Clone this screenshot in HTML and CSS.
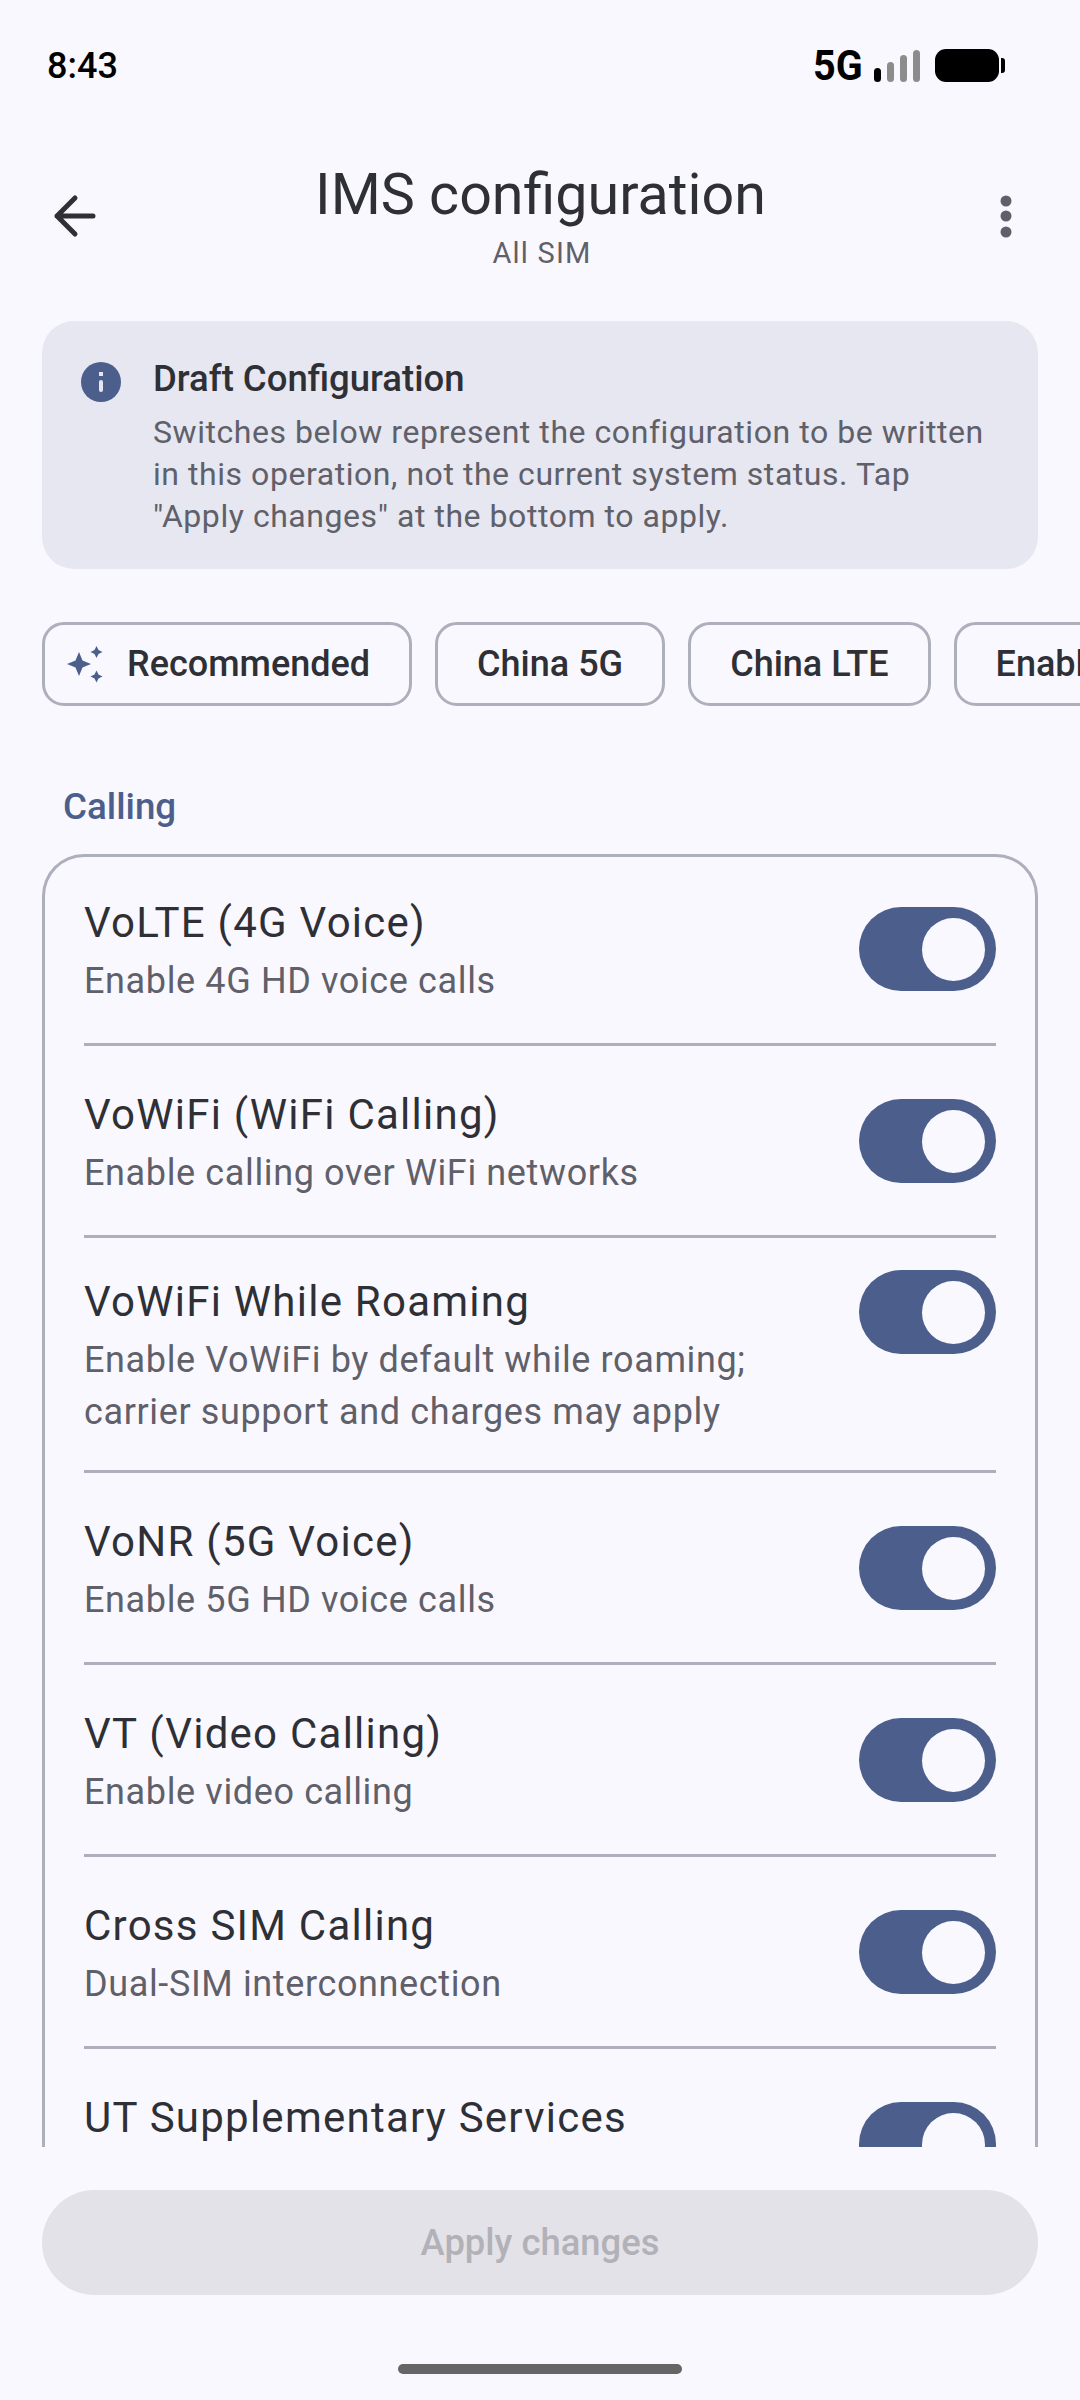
FILE: index.html
```html
<!DOCTYPE html>
<html lang="en">
<head>
  <meta charset="UTF-8">
  <title>IMS configuration</title>
  <link rel="stylesheet" href="styles.css">
</head>
<body>
  <div class="pantalla">
    <div class="estado">
      <span class="hora">8:43</span>
      <div class="estado-der">
        <span class="red">5G</span>
        <div class="senal">
          <i class="barra b1 activa"></i>
          <i class="barra b2"></i>
          <i class="barra b3"></i>
          <i class="barra b4"></i>
        </div>
        <div class="bateria"></div>
        <div class="bateria-tapa"></div>
      </div>
    </div>

    <header class="cabecera">
      <div class="icono-btn">
        <svg width="72" height="72" viewBox="0 0 72 72" fill="none" stroke="#2f3036" stroke-width="5" stroke-linecap="round" stroke-linejoin="round">
          <path d="M18 36H54M36 18L18 36L36 54"/>
        </svg>
      </div>
      <div class="titulos">
        <h1>IMS configuration</h1>
        <p>All SIM</p>
      </div>
      <div class="icono-btn">
        <svg width="72" height="72" viewBox="0 0 72 72" fill="#5f6069">
          <circle cx="36" cy="21" r="5.5"/>
          <circle cx="36" cy="36" r="5.5"/>
          <circle cx="36" cy="52" r="5.5"/>
        </svg>
      </div>
    </header>

    <main class="contenido">
      <section class="aviso">
        <svg class="aviso-icono" width="40" height="40" viewBox="0 0 40 40">
          <circle cx="20" cy="20" r="20" fill="#4c5f8c"/>
          <rect x="18" y="10" width="4" height="4" fill="#e6e7f0"/>
          <rect x="18" y="18" width="4" height="12" rx="2" fill="#e6e7f0"/>
        </svg>
        <div>
          <h2>Draft Configuration</h2>
          <p>Switches below represent the configuration to be written in this operation, not the current system status. Tap "Apply changes" at the bottom to apply.</p>
        </div>
      </section>

      <div class="chips">
        <div class="chip chip-icono">
          <svg width="40" height="40" viewBox="0 0 40 40" fill="#4c5f8c">
            <path d="M15 8L18.500 16.500L27 20L18.500 23.500L15 32L11.500 23.500L3 20L11.500 16.500Z"/>
            <path d="M32.500 2L34.500 6L38.500 8L34.500 10L32.500 14L30.500 10L26.500 8L30.500 6Z"/>
            <path d="M32.500 26.500L34.500 30.500L38.500 32.500L34.500 34.500L32.500 38.500L30.500 34.500L26.500 32.500L30.500 30.500Z"/>
          </svg>
          Recommended
        </div>
        <div class="chip">China 5G</div>
        <div class="chip">China LTE</div>
        <div class="chip">Enable all</div>
      </div>

      <h3 class="seccion">Calling</h3>

      <div class="lista">
        <div class="fila">
          <div class="fila-texto">
            <div class="fila-titulo">VoLTE (4G Voice)</div>
            <div class="fila-sub">Enable 4G HD voice calls</div>
          </div>
          <div class="switch"></div>
        </div>
        <div class="fila">
          <div class="fila-texto">
            <div class="fila-titulo">VoWiFi (WiFi Calling)</div>
            <div class="fila-sub">Enable calling over WiFi networks</div>
          </div>
          <div class="switch"></div>
        </div>
        <div class="fila">
          <div class="fila-texto">
            <div class="fila-titulo">VoWiFi While Roaming</div>
            <div class="fila-sub">Enable VoWiFi by default while roaming;<br>carrier support and charges may apply</div>
          </div>
          <div class="switch switch-arriba"></div>
        </div>
        <div class="fila">
          <div class="fila-texto">
            <div class="fila-titulo">VoNR (5G Voice)</div>
            <div class="fila-sub">Enable 5G HD voice calls</div>
          </div>
          <div class="switch"></div>
        </div>
        <div class="fila">
          <div class="fila-texto">
            <div class="fila-titulo">VT (Video Calling)</div>
            <div class="fila-sub">Enable video calling</div>
          </div>
          <div class="switch"></div>
        </div>
        <div class="fila">
          <div class="fila-texto">
            <div class="fila-titulo">Cross SIM Calling</div>
            <div class="fila-sub">Dual-SIM interconnection</div>
          </div>
          <div class="switch"></div>
        </div>
        <div class="fila">
          <div class="fila-texto fila-texto-cortada">
            <div class="fila-titulo">UT Supplementary Services</div>
          </div>
          <div class="switch"></div>
        </div>
      </div>
    </main>

    <footer class="pie">
      <button class="btn-aplicar">Apply changes</button>
      <div class="barra-inicio"></div>
    </footer>
  </div>
</body>
</html>
```

FILE: styles.css
```css
html, body {
  margin: 0;
  padding: 0;
  background: #faf8ff;
  font-family: Roboto, "Liberation Sans", sans-serif;
  color: #2f3036;
}

.pantalla {
  width: 1080px;
  height: 2400px;
  display: flex;
  flex-direction: column;
  overflow: hidden;
}

/* barra de estado */
.estado {
  height: 88px;
  flex: none;
  display: flex;
  justify-content: space-between;
  align-items: flex-start;
  padding: 0 75px 0 47px;
  box-sizing: border-box;
  color: #000;
}

.hora {
  font-size: 36px;
  font-weight: 500;
  line-height: 36px;
  margin-top: 48px;
}

.estado-der {
  display: flex;
  align-items: flex-end;
  height: 33px;
  margin-top: 49px;
}

.red {
  font-size: 43px;
  font-weight: 700;
  line-height: 33px;
  width: 61px;
  transform: scaleX(0.92);
  transform-origin: left;
}

.senal {
  display: flex;
  align-items: flex-end;
  gap: 6px;
  width: 61px;
}

.barra {
  display: block;
  width: 7px;
  border-radius: 4px;
  background: #8c8c8c;
}

.barra.activa { background: #000; }
.b1 { height: 14px; }
.b2 { height: 20px; }
.b3 { height: 27px; }
.b4 { height: 32px; }

.bateria {
  width: 64px;
  height: 33px;
  border-radius: 11px;
  background: #000;
}

.bateria-tapa {
  width: 4px;
  height: 15px;
  margin: 0 0 9px 2px;
  border-radius: 0 3px 3px 0;
  background: #000;
}

/* cabecera */
.cabecera {
  height: 233px;
  flex: none;
  display: flex;
  align-items: flex-start;
  padding: 0 38px 0 39px;
  box-sizing: border-box;
}

.icono-btn {
  width: 72px;
  height: 72px;
  flex: none;
  margin-top: 92px;
}

.icono-btn svg { display: block; }

.titulos {
  flex: 1;
  text-align: center;
  padding-top: 72px;
}

.titulos h1 {
  margin: 0;
  font-size: 57.400px;
  font-weight: 400;
  line-height: 70px;
}

.titulos p {
  margin: 4px 0 0;
  padding-left: 3px;
  font-size: 29px;
  line-height: 38px;
  letter-spacing: 1.200px;
  color: #5f6069;
}

/* contenido */
.contenido {
  flex: 1;
  min-height: 0;
  overflow: hidden;
  padding: 0 42px;
}

.aviso {
  height: 248px;
  display: flex;
  gap: 32px;
  padding: 41px 39px 0;
  box-sizing: border-box;
  border-radius: 32px;
  background: #e6e7f0;
}

.aviso-icono { flex: none; }

.aviso h2 {
  margin: -4px 0 0;
  font-size: 36.500px;
  font-weight: 500;
  line-height: 42px;
}

.aviso p {
  margin: 11px 0 0;
  font-size: 32px;
  line-height: 42px;
  letter-spacing: 0.550px;
  color: #5f6069;
}

.chips {
  display: flex;
  gap: 23px;
  margin: 53px -42px 0 0;
  overflow: hidden;
}

.chip {
  height: 84px;
  flex: none;
  display: flex;
  align-items: center;
  gap: 23px;
  padding: 0 39px;
  box-sizing: border-box;
  border: 3px solid #aeafbc;
  border-radius: 22px;
  font-size: 36px;
  font-weight: 500;
}

.chip-icono { padding-left: 19px; }
.chip-icono svg { flex: none; }

.seccion {
  margin: 76px 0 22px 21px;
  font-size: 36.750px;
  font-weight: 500;
  line-height: 50px;
  color: #4c5f8c;
}

.lista {
  padding: 0 42px;
  border-radius: 42px;
  box-shadow: inset 0 0 0 3px #aeafbc;
}

.fila {
  min-height: 125px;
  display: flex;
  justify-content: space-between;
  align-items: center;
  padding: 32px 0;
  border-bottom: 3px solid #aeafbc;
}

.fila-texto-cortada { height: 116px; }

.fila-titulo {
  font-size: 42px;
  line-height: 64px;
  letter-spacing: 1.250px;
}

.fila-sub {
  font-size: 36px;
  line-height: 52px;
  letter-spacing: 0.630px;
  color: #5f6069;
}

.switch {
  position: relative;
  width: 137px;
  height: 84px;
  flex: none;
  border-radius: 42px;
  background: #4c5f8c;
}

.switch::after {
  content: "";
  position: absolute;
  top: 11px;
  right: 11px;
  width: 63px;
  height: 63px;
  border-radius: 50%;
  background: #faf8ff;
}

.switch-arriba { align-self: flex-start; }

/* pie */
.pie {
  height: 253px;
  flex: none;
  padding: 43px 42px 0;
  box-sizing: border-box;
}

.btn-aplicar {
  display: block;
  width: 100%;
  height: 105px;
  border: none;
  border-radius: 53px;
  background: #e4e2e9;
  color: #b2b1b7;
  font-family: inherit;
  font-size: 36.400px;
  font-weight: 500;
}

.barra-inicio {
  width: 284px;
  height: 10px;
  margin: 69px auto 0;
  border-radius: 5px;
  background: #666;
}
```
